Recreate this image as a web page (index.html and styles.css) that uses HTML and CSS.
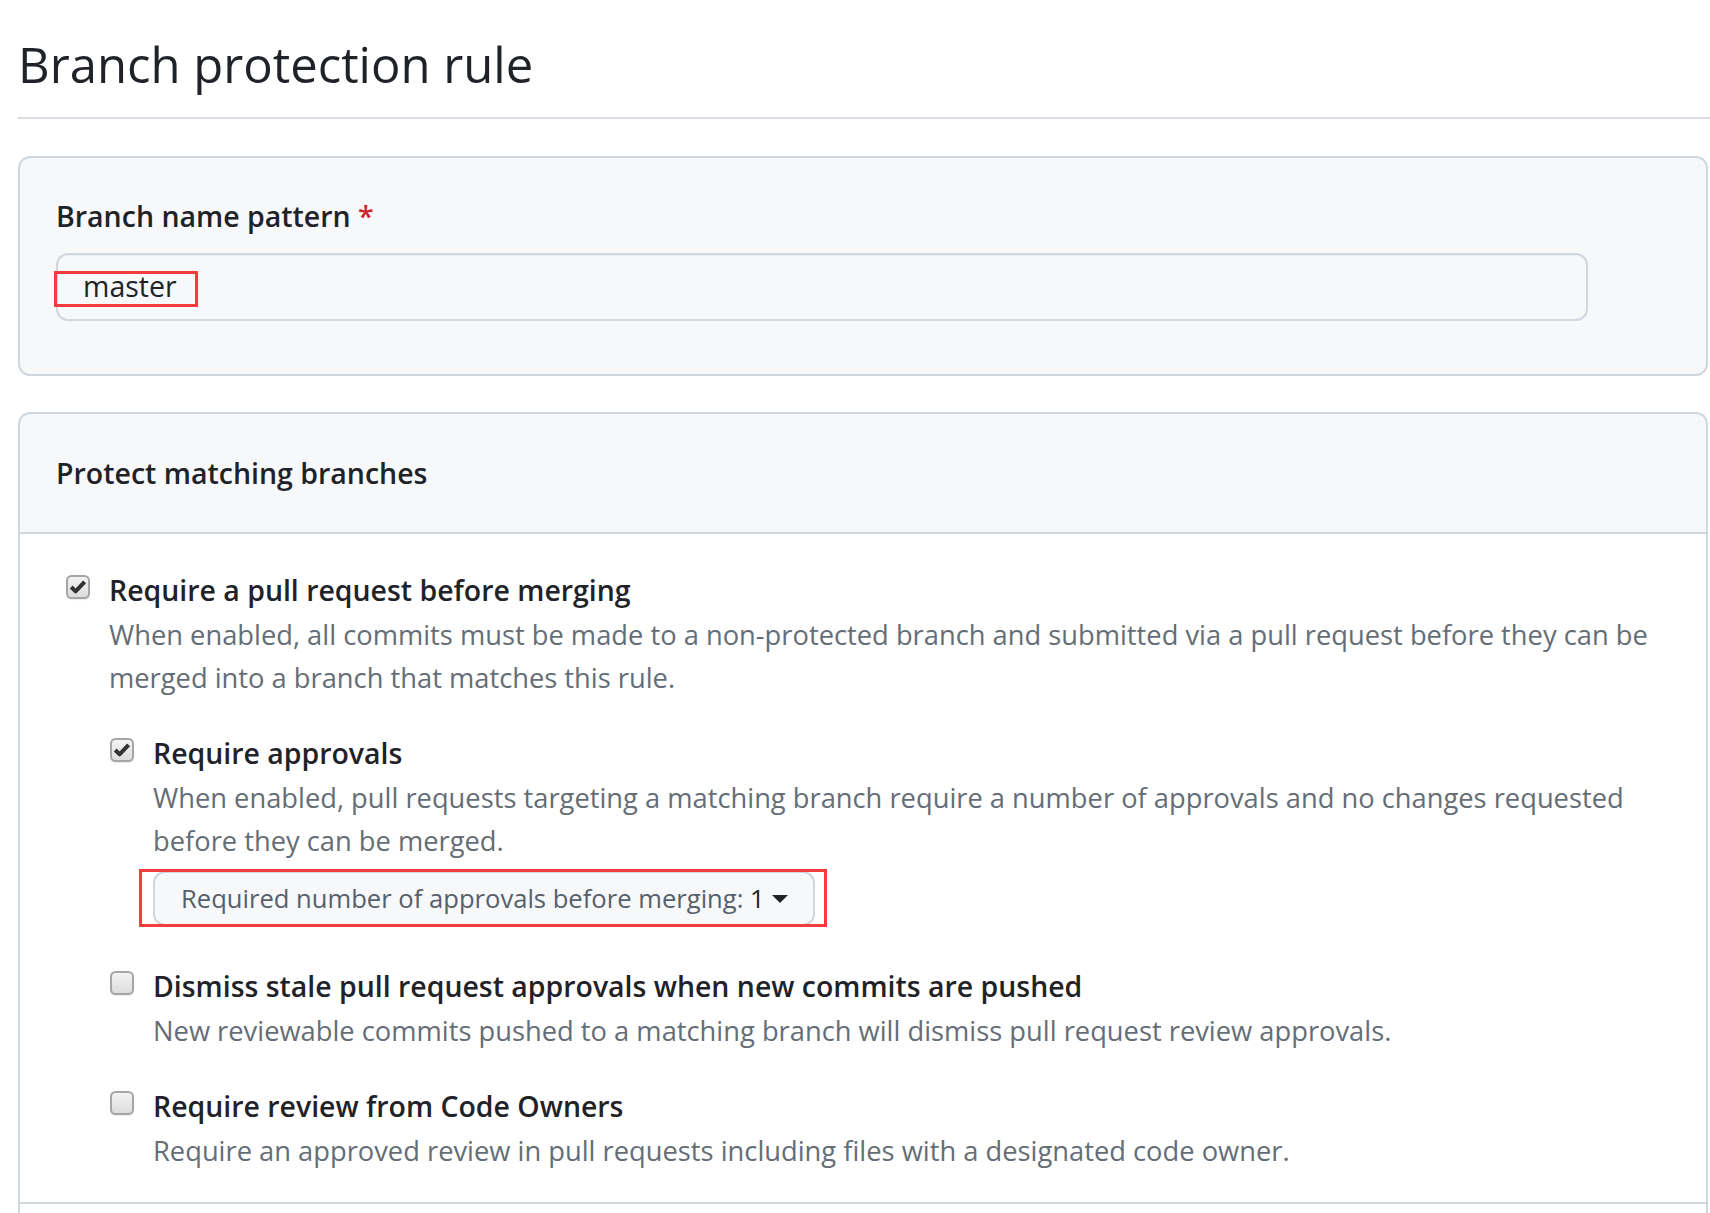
FILE: index.html
```html
<!DOCTYPE html>
<html lang="en">
<head>
<meta charset="utf-8">
<title>Branch protection rule</title>
<link rel="stylesheet" href="styles.css">
</head>
<body>
<div class="page">
  <h1 class="title">Branch protection rule</h1>

  <section class="box box-pattern">
    <label class="label" for="pattern">Branch name pattern <span class="req">*</span></label>
    <div class="input-wrap">
      <div class="input" id="pattern">master</div>
      <span class="mark mark-input"></span>
    </div>
  </section>

  <section class="box box-protect">
    <div class="box-header">Protect matching branches</div>
    <div class="box-body">
      <div class="opt">
        <span class="cb">
          <svg width="24" height="24" viewBox="0 0 24 24"><defs><linearGradient id="g1" x1="0" y1="0" x2="0" y2="1"><stop offset="0" stop-color="#f4f4f4"/><stop offset="1" stop-color="#dcdcdc"/></linearGradient></defs><rect x="1" y="1" width="22" height="22" rx="4.5" fill="url(#g1)" stroke="#a6a6a6" stroke-width="2"/><path d="M5.2 12 L9.6 16.4 L18.6 6.8" fill="none" stroke="#333" stroke-width="4" stroke-linejoin="round"/></svg>
        </span>
        <div class="opt-body">
          <div class="opt-title">Require a pull request before merging</div>
          <p class="opt-desc">When enabled, all commits must be made to a non-protected branch and submitted via a pull request before they can be merged into a branch that matches this rule.</p>

          <div class="sub">
            <div class="opt">
              <span class="cb">
                <svg width="24" height="24" viewBox="0 0 24 24"><defs><linearGradient id="g2" x1="0" y1="0" x2="0" y2="1"><stop offset="0" stop-color="#f4f4f4"/><stop offset="1" stop-color="#dcdcdc"/></linearGradient></defs><rect x="1" y="1" width="22" height="22" rx="4.5" fill="url(#g2)" stroke="#a6a6a6" stroke-width="2"/><path d="M5.2 12 L9.6 16.4 L18.6 6.8" fill="none" stroke="#333" stroke-width="4" stroke-linejoin="round"/></svg>
              </span>
              <div class="opt-body">
                <div class="opt-title">Require approvals</div>
                <p class="opt-desc">When enabled, pull requests targeting a matching branch require a number of approvals and no changes requested before they can be merged.</p>
                <div class="btn-wrap">
                  <div class="btn"><span class="btn-text">Required number of approvals before merging:&nbsp;<span class="btn-val">1</span></span><span class="caret"></span></div>
                  <span class="mark mark-btn"></span>
                </div>
              </div>
            </div>

            <div class="opt">
              <span class="cb">
                <svg width="24" height="24" viewBox="0 0 24 24"><defs><linearGradient id="g3" x1="0" y1="0" x2="0" y2="1"><stop offset="0" stop-color="#f4f4f4"/><stop offset="1" stop-color="#dcdcdc"/></linearGradient></defs><rect x="1" y="1" width="22" height="22" rx="4.5" fill="url(#g3)" stroke="#a6a6a6" stroke-width="2"/></svg>
              </span>
              <div class="opt-body">
                <div class="opt-title">Dismiss stale pull request approvals when new commits are pushed</div>
                <p class="opt-desc">New reviewable commits pushed to a matching branch will dismiss pull request review approvals.</p>
              </div>
            </div>

            <div class="opt">
              <span class="cb">
                <svg width="24" height="24" viewBox="0 0 24 24"><defs><linearGradient id="g4" x1="0" y1="0" x2="0" y2="1"><stop offset="0" stop-color="#f4f4f4"/><stop offset="1" stop-color="#dcdcdc"/></linearGradient></defs><rect x="1" y="1" width="22" height="22" rx="4.5" fill="url(#g4)" stroke="#a6a6a6" stroke-width="2"/></svg>
              </span>
              <div class="opt-body">
                <div class="opt-title">Require review from Code Owners</div>
                <p class="opt-desc">Require an approved review in pull requests including files with a designated code owner.</p>
              </div>
            </div>
          </div>
        </div>
      </div>
    </div>
    <div class="box-more"></div>
  </section>
</div>
</body>
</html>
```

FILE: styles.css
```css
html, body {
  margin: 0;
  padding: 0;
  background: #ffffff;
  overflow: hidden;
}

body {
  font-family: "Open Sans", "Noto Sans", sans-serif;
  color: #1f2328;
}

.page {
  padding: 34px 2px 0 18px;
}

.title {
  margin: 0 -2px 0 0;
  font-size: 49px;
  line-height: 61px;
  font-weight: 400;
  color: #1f2328;
  padding-bottom: 22px;
  border-bottom: 2px solid #d8dee4;
}

.box {
  border: 2px solid #d0d7de;
  border-radius: 12px;
  background: #f6f8fa;
}

.box-pattern {
  margin-top: 37px;
  padding: 36px 118px 53px 36px;
}

.label {
  display: block;
  font-size: 28.5px;
  line-height: 44px;
  font-weight: 600;
  color: #1f2328;
}

.req {
  color: #cf222e;
}

.input-wrap {
  position: relative;
  margin-top: 15px;
}

.input {
  box-sizing: border-box;
  height: 68px;
  border: 2px solid #d0d7de;
  border-radius: 12px;
  background: #f6f8fa;
  padding-left: 25px;
  font-size: 28.5px;
  line-height: 63px;
  color: #1f2328;
  box-shadow: inset 0 1px 0 rgba(208, 215, 222, 0.2);
}

.mark {
  position: absolute;
  box-sizing: border-box;
  border: 3px solid #f53b3b;
  pointer-events: none;
}

.mark-input {
  left: -2px;
  top: 18px;
  width: 144px;
  height: 36px;
}

.box-protect {
  margin-top: 36px;
  border-bottom: none;
  border-bottom-left-radius: 0;
  border-bottom-right-radius: 0;
  overflow: hidden;
}

.box-header {
  padding: 37px 36px 37px 36px;
  font-size: 28.5px;
  line-height: 44px;
  font-weight: 600;
  border-bottom: 2px solid #d0d7de;
}

.box-body {
  background: #ffffff;
  padding: 34px 28px 30px 46px;
  border-bottom: 2px solid #d0d7de;
}

.box-more {
  background: #ffffff;
  height: 40px;
}

.opt {
  display: flex;
  align-items: flex-start;
}

.cb {
  flex: none;
  width: 24px;
  height: 24px;
  margin-top: 7px;
  margin-right: 19px;
  border-radius: 5px;
  box-shadow: 0 1px 1px rgba(0, 0, 0, 0.08);
}

.cb svg {
  display: block;
}

.opt-body {
  flex: 1;
  min-width: 0;
}

.opt-title {
  font-size: 28.45px;
  line-height: 44px;
  font-weight: 600;
  color: #1f2328;
}

.opt-desc {
  margin: 1px 0 0 0;
  font-size: 27.3px;
  line-height: 43px;
  color: #656d76;
}

.sub {
  margin-top: 32px;
  padding-left: 1px;
}

.sub .opt + .opt {
  margin-top: 32.5px;
}

.btn-wrap {
  position: relative;
  display: inline-block;
  margin-top: 8.5px;
  margin-bottom: 5.5px;
}

.btn {
  box-sizing: border-box;
  display: inline-flex;
  align-items: center;
  height: 55px;
  padding: 0 25px 0 26px;
  border: 2px solid #d0d7de;
  border-radius: 12px;
  background: #f6f8fa;
  font-size: 25.6px;
  line-height: 51px;
  color: #57606a;
  white-space: nowrap;
}

.btn-val {
  color: #1f2328;
}

.caret {
  display: inline-block;
  width: 0;
  height: 0;
  margin-left: 7px;
  border-left: 8px solid transparent;
  border-right: 8px solid transparent;
  border-top: 8px solid #1f2328;
  margin-top: 1px;
}

.mark-btn {
  left: -14px;
  top: -2px;
  width: 688px;
  height: 58px;
}
```
